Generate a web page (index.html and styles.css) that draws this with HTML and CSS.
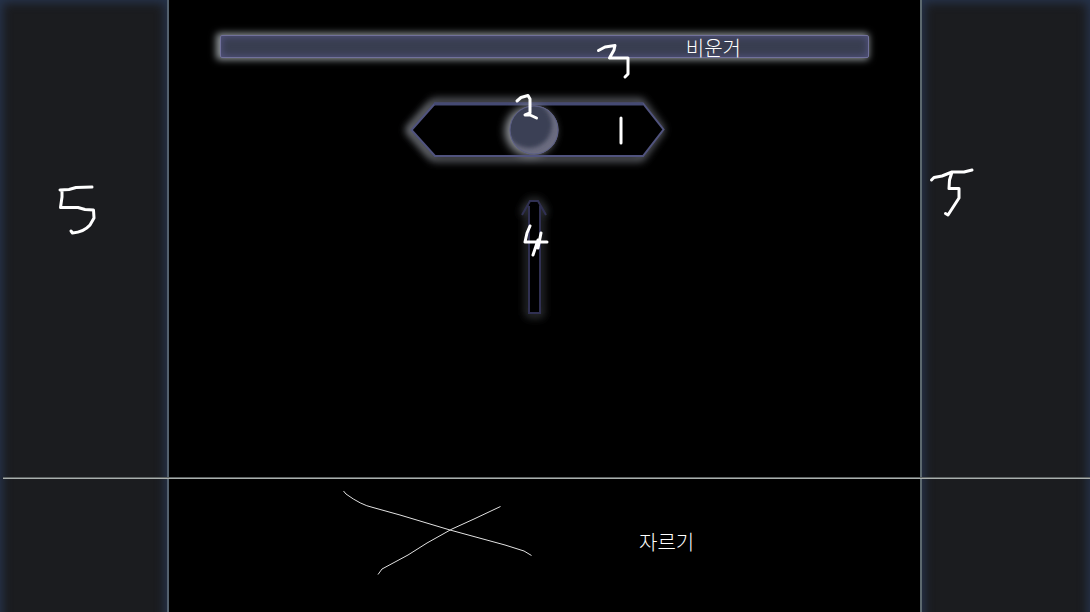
FILE: index.html
```html
<!DOCTYPE html>
<html lang="ko">
<head>
<meta charset="utf-8">
<meta name="viewport" content="width=device-width, initial-scale=1">
<title>UI 스케치</title>
<link rel="stylesheet" href="styles.css">
</head>
<body>
<div class="sheet">
  <aside class="panel panel-left">
    <svg class="ink ink-left" width="44" height="56" viewBox="54 182 44 56" role="img" aria-label="5">
      <path d="M92 187 L76 187.500 L69 189.500 L60 190 M62 190 L62 197 L60.500 207.500 L78 207.500 L85 209.500 L93.500 210 L94 218 L90 225 Q84 232 72.500 233 L71 231"/>
    </svg>
  </aside>
  <main class="stage">
    <header class="bar"><span class="label">비운거</span></header>
    <svg class="figure" width="320" height="270" viewBox="380 68 320 270" role="img" aria-label="1, 2, 4">
      <defs>
        <filter id="glow" x="-40%" y="-40%" width="180%" height="180%">
          <feGaussianBlur stdDeviation="4"/>
        </filter>
        <filter id="soft" x="-20%" y="-20%" width="140%" height="140%">
          <feGaussianBlur stdDeviation="2"/>
        </filter>
        <clipPath id="disc"><circle cx="534" cy="130" r="24"/></clipPath>
      </defs>
      <path class="halo" filter="url(#glow)" d="M409 130 L434 102 H641 L661 129.500 L641 158 H434 Z"/>
      <path class="halo-left" filter="url(#glow)" d="M432 105 L410 130 L432 156"/>
      <path class="hex" d="M411.500 130 L435 103.500 H643 L663.500 129.500 L643 156 H435 Z"/>
      <path class="hex-shade" d="M434 104 H643"/>
      <circle class="disc-halo" cx="530" cy="131" r="25" filter="url(#glow)"/>
      <path class="hex-edge" d="M435 156 H643"/>
      <circle class="disc" cx="534" cy="130" r="24.500"/>
      <g clip-path="url(#disc)"><circle class="disc-face" cx="529" cy="125" r="23" filter="url(#soft)"/></g>
      <circle class="disc-edge" cx="534" cy="130" r="24"/>
      <path class="arrow-halo" filter="url(#glow)" d="M528 315 V204 L522 214 M528 201 H539 L546 214 M541 206 V315 H528"/>
      <path class="arrow-fill" d="M529 202 H539 L540 313 H529 Z"/>
      <path class="arrow" d="M522 215 L530 201 H538 L546 215 M529 206 V313 H540 V206"/>
      <path class="ink" d="M517 101 L521 97.500 L528 95.500 L530 99 V113 L525 115 H530 L536.500 118"/>
      <path class="ink" d="M621 118 L621 143"/>
      <path class="ink" d="M530 226 L527 233 L525 242 H547 M541 233 L538 248 M538 240 L533 255"/>
    </svg>
    <section class="bottom">
      <svg class="cross" width="200" height="96" viewBox="338 484 200 96" aria-hidden="true">
        <path d="M343.500 491 L346 494 Q361 505 373 507.500 L400 515 L450 530 L505 545 L524 551 L531.500 555.500"/>
        <path d="M500.500 506.500 L474 519 L452 529 L427 543 L408 555 L382 569 L378 574.500"/>
      </svg>
      <span class="label">자르기</span>
    </section>
    <svg class="ink ink-bar" width="40" height="40" viewBox="594 41 40 40" role="img" aria-label="3">
      <path d="M598.500 50.500 L605 47 L615 45.500 L614 50 L609.500 58 H628 V74 L625 77"/>
    </svg>
  </main>
  <aside class="panel panel-right">
    <svg class="ink ink-right" width="48" height="52" viewBox="928 166 48 52" role="img" aria-label="5">
      <path d="M931.500 180 L934 177.500 L942 176 L952 172 L964 172 L972 170 M952 172 L949.500 180 L949 188.500 H959 V198 L948 215 L945.500 213.500"/>
    </svg>
  </aside>
  <hr class="guide">
</div>
</body>
</html>
```
FILE: styles.css
```css
* { box-sizing: border-box; }

body {
  margin: 0;
  background: #000;
  color: #fff;
  font-family: "Noto Sans CJK KR", sans-serif;
}

.sheet {
  position: relative;
  display: grid;
  grid-template-columns: 169px 1fr 170px;
  min-height: 100vh;
  overflow: hidden;
}

.panel {
  position: relative;
  overflow: hidden;
  background: #1b1c1f;
}

/* inner glow on the top and sides, running off the bottom edge */
.panel::before {
  content: "";
  position: absolute;
  inset: 0 0 -24px;
  box-shadow: inset 0 0 10px 3px #26334b;
}

.panel-left { border-right: 2px solid #53606d; }
.panel-right { border-left: 2px solid #5c696f; }

.stage {
  position: relative;
  display: flex;
  flex-direction: column;
  padding: 35px 51px 0;
}

.bar {
  display: flex;
  align-items: center;
  justify-content: flex-end;
  height: 23px;
  padding-right: 127px;
  border: 1px solid #71719b;
  border-radius: 2px;
  background: #393e51;
  box-shadow: inset 0 0 7px 1px #51527d, -2px 0 7px 2px #8d9397;
}

.label {
  font-size: 20px;
  line-height: 24px;
  font-weight: 300;
}

.bar .label { padding-top: 2px; }

.figure {
  align-self: center;
  margin: 10px 10px 0 0;
}

.halo { fill: none; stroke: #8b8f98; stroke-width: 5; }
.halo-left { fill: none; stroke: #85898f; stroke-width: 3; }
.hex { fill: #000; stroke: #50537e; stroke-width: 2; }
.hex-shade { fill: none; stroke: #454a73; stroke-width: 3; }
.hex-edge { fill: none; stroke: #50537e; stroke-width: 2; }
.disc-halo { fill: #8d9197; }
.disc { fill: #6b6c80; }
.disc-face { fill: #3b4054; }
.disc-edge { fill: none; stroke: #5b5e86; stroke-width: 1; }
.arrow-halo { fill: none; stroke: #5c6066; stroke-width: 3; }
.arrow-fill { fill: #000; }
.arrow { fill: none; stroke: #303052; stroke-width: 2; }

.ink {
  fill: none;
  stroke: #fff;
  stroke-width: 3;
  stroke-linecap: round;
  stroke-linejoin: round;
}

.ink-left { position: absolute; left: 54px; top: 182px; }
.ink-right { position: absolute; left: 6px; top: 166px; }
.ink-bar { position: absolute; left: 425px; top: 41px; }

.bottom {
  display: flex;
  align-items: center;
  gap: 101px;
  padding: 146px 0 32px 118px;
}

.bottom .label { margin-top: 20px; }

.cross {
  fill: none;
  stroke: #e2e2e2;
  stroke-width: 1;
}

.guide {
  position: absolute;
  left: 3px;
  right: 0;
  top: 477px;
  height: 2px;
  margin: 0;
  border: 0;
  border-top: 1px solid #5f6464;
  background: #a9afad;
}
```
